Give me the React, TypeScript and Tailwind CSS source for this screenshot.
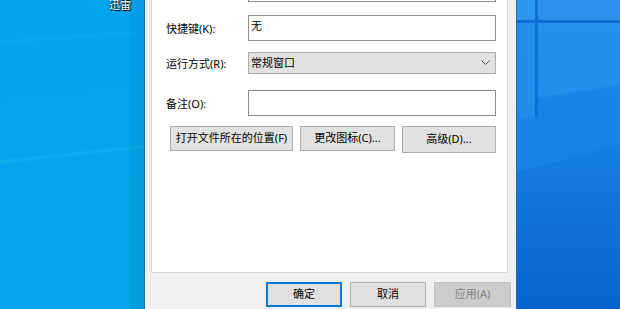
import React from "react";

const font = { fontFamily: '"Noto Sans", "Noto Sans CJK SC", sans-serif' };

function Wallpaper() {
  return (
    <svg className="absolute inset-0" width="620" height="309" viewBox="0 0 620 309">
      <defs>
        <linearGradient id="left" x1="0" y1="0" x2="0.2" y2="1">
          <stop offset="0" stopColor="#03a4ee" />
          <stop offset="1" stopColor="#05a6ea" />
        </linearGradient>
        <linearGradient id="right" x1="0" y1="0" x2="0" y2="1">
          <stop offset="0" stopColor="#1f8fea" />
          <stop offset="0.45" stopColor="#1580e2" />
          <stop offset="1" stopColor="#0764cf" />
        </linearGradient>
      </defs>
      <rect x="0" y="0" width="620" height="309" fill="url(#left)" />
      <path d="M0 40 L144 30 L144 34 L0 44 Z" fill="#0cb0f3" opacity="0.35" />
      <path d="M0 160 L144 145 L144 148 L0 164 Z" fill="#22b8f6" opacity="0.35" />
      <rect x="130" y="0" width="14" height="309" fill="#0790cf" opacity="0.35" />
      <rect x="517" y="0" width="103" height="309" fill="url(#right)" />
      <rect x="517" y="0" width="19" height="20" fill="#2c97ee" />
      <rect x="538" y="0" width="82" height="20" fill="#2993ec" />
      <rect x="517" y="20" width="103" height="3" fill="#0a6fd6" />
      <rect x="535" y="0" width="3" height="118" fill="#0b72d8" />
      <path d="M538 23 L620 23 L620 85 L538 98 Z" fill="#2a95ee" opacity="0.6" />
      <path d="M517 23 L535 23 L535 118 L517 120 Z" fill="#2792ec" opacity="0.6" />
      <path d="M517 118 L620 110 L620 145 L517 172 Z" fill="#1a86e6" opacity="0.7" />
    </svg>
  );
}

function Field({ label, children }: { label: string; children: React.ReactNode }) {
  return (
    <div className="flex items-center">
      <span className="w-[82px] whitespace-nowrap text-[11px] leading-none text-black">{label}</span>
      {children}
    </div>
  );
}

function Button({ label, w, h = 25 }: { label: string; w: number; h?: number }) {
  return (
    <div
      className="flex items-center justify-center whitespace-nowrap border border-[#adadad] bg-[#e1e1e1] text-[11px] text-black"
      style={{ width: w, height: h }}
    >
      {label}
    </div>
  );
}

export default function App() {
  return (
    <div className="relative h-[309px] w-[620px] overflow-hidden" style={font}>
      <Wallpaper />

      <span
        className="absolute left-[109px] top-[-1px] text-[11px] leading-[11px] text-white"
        style={{ textShadow: "0 0 2px #000, 1px 1px 1px #000" }}
      >
        迅雷
      </span>

      <div className="absolute left-[144px] top-[-41px] flex h-[380px] w-[373px] flex-col border border-[#2a6e98] bg-[#f0f0f0] pl-[6px] pr-[8px]">
        <div className="flex h-[313px] flex-col border border-[#d9d9d9] bg-white pl-[14px] pt-[15px]">
          <div className="ml-[82px] h-[26px] w-[248px] border border-[#8f8f8f] bg-white" />

          <div className="mt-[13px]">
            <Field label="快捷键(K):">
              <div className="flex h-[26px] w-[248px] items-start border border-[#8f8f8f] bg-white px-[2px] pt-[4px] text-[11px] leading-none">
                无
              </div>
            </Field>
          </div>

          <div className="mt-[11px]">
            <Field label="运行方式(R):">
              <div className="flex h-[22px] w-[248px] items-center justify-between border border-[#adadad] bg-[#e1e1e1] pl-[2px] pr-[5px] text-[11px]">
                <span>常规窗口</span>
                <svg width="9" height="6" viewBox="0 0 9 6">
                  <polyline points="0.5,0.5 4.5,4.5 8.5,0.5" fill="none" stroke="#555" strokeWidth="1" />
                </svg>
              </div>
            </Field>
          </div>

          <div className="mt-[16px]">
            <Field label="备注(O):">
              <div className="h-[26px] w-[248px] border border-[#8f8f8f] bg-white" />
            </Field>
          </div>

          <div className="ml-[4px] mt-[10px] flex items-start gap-[7px]">
            <Button label="打开文件所在的位置(F)" w={123} />
            <Button label="更改图标(C)..." w={95} />
            <Button label="高级(D)..." w={94} h={27} />
          </div>
        </div>

        <div className="mr-[-3px] mt-[9px] flex justify-end gap-[8px]">
          <div className="flex h-[25px] w-[76px] items-center justify-center border-2 border-[#0078d7] bg-[#e1e1e1] text-[11px]">
            确定
          </div>
          <Button label="取消" w={76} />
          <div className="flex h-[25px] w-[77px] items-center justify-center border border-[#bfbfbf] bg-[#cccccc] text-[11px] text-[#838383]">
            应用(A)
          </div>
        </div>
      </div>
    </div>
  );
}
